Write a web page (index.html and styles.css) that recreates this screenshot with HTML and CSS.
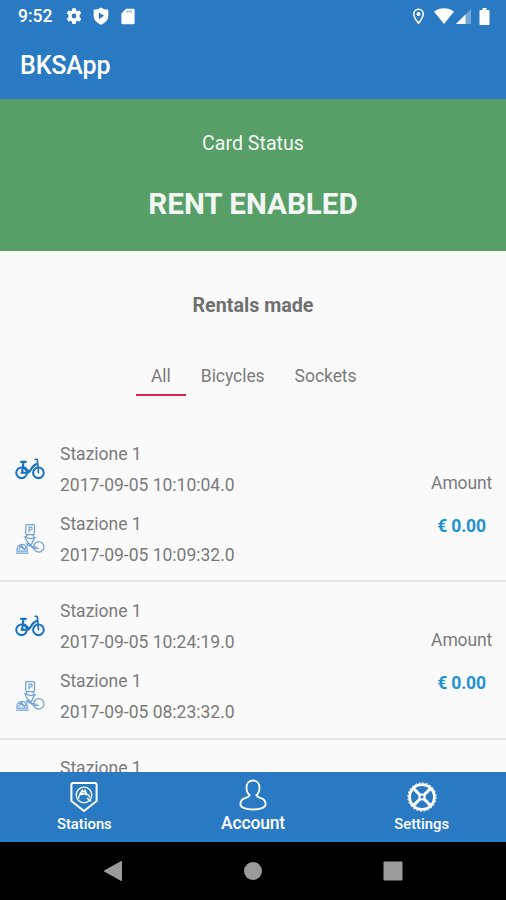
FILE: index.html
```html
<!DOCTYPE html>
<html lang="en">
<head>
    <meta charset="UTF-8">
    <meta name="viewport" content="width=device-width, initial-scale=1.0">
    <title>BKSApp</title>
    <link rel="stylesheet" href="styles.css">
</head>
<body>
    <svg class="sprite" xmlns="http://www.w3.org/2000/svg">
        <symbol id="bike" viewBox="0 0 32 24">
            <g fill="none" stroke="currentColor" stroke-linecap="round" stroke-linejoin="round">
                <circle cx="7" cy="16" r="5.700" stroke-width="2.200"/>
                <circle cx="25" cy="16" r="5.700" stroke-width="2.200"/>
                <path d="M6.500 4.400h5M9 4.600l-1.400 11.400" stroke-width="2.300"/>
                <path d="M7 16h6.600c3.400 0 3.200-7.600 9.600-9.200M8.400 10c3.400.6 4 2.600 6 4.600" stroke-width="2.300"/>
                <path d="M21.600 1.600h1.200q1 0 1.100 1.100L25 16" stroke-width="1.800"/>
            </g>
        </symbol>
        <symbol id="dock" viewBox="0 0 32 34">
            <g fill="none" stroke="currentColor" stroke-linecap="round" stroke-linejoin="round">
                <rect x="11.400" y="1.600" width="9.400" height="10.800" rx="1.200" stroke-width="1.300"/>
                <path d="M15 9.600V4.400h1.800a1.500 1.500 0 0 1 0 3H15" stroke-width="1.300"/>
                <path d="M13 12.600l-2 3.400 3 5.400-2 5M19 12.600l2 3.400-3 6M10 14.600l6 2 6-1M15 21.400l3 3.400 5 1M14 21l3 3 3-7" stroke-width="1.200"/>
                <circle cx="25.400" cy="25.400" r="5.500" stroke-width="1.300"/>
                <path d="M1.400 32h12.800M2.200 30h11M2 29.400c0-9 10-9 11.400 0M4 28l3-4 3 4 2-2.400M4.500 24.500l6 4M12 22l8 5h5" stroke-width="1.300"/>
            </g>
        </symbol>
    </svg>

    <div class="status-bar">
        <span class="clock">9:52</span>
        <svg class="status-icon gear" viewBox="0 0 24 24"><path fill="#fff" fill-rule="evenodd" d="M9.800 1.500h4.400l.5 3 2 1.100 2.800-1.100 2.200 3.800-2.300 1.900v3.600l2.300 1.900-2.200 3.800-2.800-1.100-2 1.100-.5 3H9.800l-.5-3-2-1.100-2.800 1.100-2.200-3.800 2.300-1.900v-3.600L2.300 8.300l2.200-3.800 2.800 1.100 2-1.100zM12 8.800a3.200 3.200 0 1 0 0 6.400 3.200 3.200 0 0 0 0-6.400z"/></svg>
        <svg class="status-icon shield" viewBox="0 0 24 24"><path fill="#fff" fill-rule="evenodd" d="M12 .6c3 2 6 3 9.800 3v7.800c0 5.400-3.600 9.900-9.800 12.200-6.200-2.300-9.800-6.800-9.800-12.200V3.600C6 3.600 9 2.600 12 .6zM9.200 7.200v9l7-4.500z"/></svg>
        <svg class="status-icon sd" viewBox="0 0 14 17"><path fill="#fff" d="M5 .8h7.400a1.200 1.200 0 0 1 1.200 1.200v13a1.200 1.200 0 0 1-1.200 1.200H1.600A1.200 1.200 0 0 1 .4 15V5.400z"/><path d="M5.600 3.400h5.800" stroke="#2a7ac3" stroke-width="2" stroke-dasharray="1.200 .8" opacity=".7"/></svg>
        <div class="status-right">
            <svg class="pin" viewBox="0 0 12 17"><path d="M6 1.200a4.700 4.700 0 0 0-4.700 4.700C1.300 9.200 6 15.300 6 15.300s4.700-6.100 4.700-9.400A4.700 4.700 0 0 0 6 1.200z" fill="none" stroke="#fff" stroke-width="1.500"/><circle cx="6" cy="6" r="2" fill="#fff"/></svg>
            <svg class="wifi" viewBox="0 0 20 16"><path fill="#fff" d="M0 3.500C6-1 14-1 20 3.500L10 16z"/></svg>
            <svg class="signal" viewBox="0 0 15 15"><path fill="#fff" opacity=".35" d="M15 0v15H0z"/><path fill="#fff" d="M9.500 5.500V15H0z"/></svg>
            <svg class="battery" viewBox="0 0 10 17"><path fill="#fff" d="M3 0h4v2h2.200q.8 0 .8.800v13.400q0 .8-.8.800H.8q-.8 0-.8-.8V2.800Q0 2 .8 2H3z"/></svg>
        </div>
    </div>

    <header class="app-bar">
        <h1>BKSApp</h1>
    </header>

    <section class="card-status">
        <p class="card-label">Card Status</p>
        <p class="card-value">RENT ENABLED</p>
    </section>

    <main class="rentals">
        <h2>Rentals made</h2>
        <div class="tabs">
            <a class="tab active">All</a>
            <a class="tab">Bicycles</a>
            <a class="tab">Sockets</a>
        </div>

        <div class="rental">
            <div class="trips">
                <div class="trip">
                    <svg class="trip-icon bike"><use href="#bike"/></svg>
                    <div class="trip-info"><p>Stazione 1</p><p>2017-09-05 10:10:04.0</p></div>
                </div>
                <div class="trip">
                    <svg class="trip-icon dock"><use href="#dock"/></svg>
                    <div class="trip-info"><p>Stazione 1</p><p>2017-09-05 10:09:32.0</p></div>
                </div>
            </div>
            <div class="amount">
                <p>Amount</p>
                <p class="price">€ 0.00</p>
            </div>
        </div>

        <div class="rental">
            <div class="trips">
                <div class="trip">
                    <svg class="trip-icon bike"><use href="#bike"/></svg>
                    <div class="trip-info"><p>Stazione 1</p><p>2017-09-05 10:24:19.0</p></div>
                </div>
                <div class="trip">
                    <svg class="trip-icon dock"><use href="#dock"/></svg>
                    <div class="trip-info"><p>Stazione 1</p><p>2017-09-05 08:23:32.0</p></div>
                </div>
            </div>
            <div class="amount">
                <p>Amount</p>
                <p class="price">€ 0.00</p>
            </div>
        </div>

        <div class="rental last">
            <div class="trips">
                <div class="trip">
                    <svg class="trip-icon bike"><use href="#bike"/></svg>
                    <div class="trip-info"><p>Stazione 1</p></div>
                </div>
            </div>
        </div>
    </main>

    <nav class="bottom-nav">
        <a class="nav-item">
            <svg viewBox="0 0 30 32">
                <g fill="none" stroke="#fff" stroke-linejoin="round" stroke-linecap="round">
                    <path d="M4 2h22q1.600 0 1.600 1.600V20L15 30 2.400 20V3.600Q2.400 2 4 2z" stroke-width="2"/>
                    <circle cx="15" cy="14" r="7.800" stroke-width="1.300"/>
                    <path d="M9.800 17a3 3 0 0 1 4-3.500M16.500 13.500a3.200 3.200 0 0 1 4 2.500M11 13l2.500-4M17.500 13l-1.500-4M12.500 12.500h5M13 10.500h3M18.500 17.500l3 2.500" stroke-width="1.500"/>
                </g>
            </svg>
            <span>Stations</span>
        </a>
        <a class="nav-item selected">
            <svg viewBox="0 0 30 32">
                <path d="M15 1.500c-4 0-6.500 3-6.500 7.200 0 3.300 1.300 6 3.200 7.600-.5 1.600-2.200 2-4.600 2.800-3.200 1-4.700 3-4.700 6.300 0 3 5.500 5.100 12.600 5.100s12.600-2.100 12.600-5.100c0-3.300-1.500-5.300-4.700-6.300-2.400-.8-4.100-1.200-4.600-2.800 1.900-1.600 3.200-4.300 3.200-7.600 0-4.200-2.500-7.200-6.500-7.200z" fill="none" stroke="#fff" stroke-width="1.800"/>
            </svg>
            <span>Account</span>
        </a>
        <a class="nav-item">
            <svg viewBox="0 0 30 32">
                <g fill="none" stroke="#fff">
                    <circle cx="15" cy="16" r="12.400" stroke-width="2.800"/>
                    <circle cx="15" cy="16" r="14.200" stroke-width="1" stroke-dasharray="1.850 1.867"/>
                    <circle cx="15" cy="16" r="2.600" stroke-width="2"/>
                    <path d="M13.200 14.200L6.600 7.600M16.800 14.200l6.600-6.600M13.200 17.800l-6.600 6.600M16.800 17.800l6.600 6.600" stroke-width="3"/>
                </g>
            </svg>
            <span>Settings</span>
        </a>
    </nav>

    <div class="system-nav">
        <svg viewBox="0 0 20 22"><path fill="#9b9b9b" d="M19 1.500v19q0 .8-.8.400L1.200 11.600q-.9-.5 0-1L18.200 1.100q.8-.4.8.4z"/></svg>
        <svg viewBox="0 0 20 22"><circle cx="10" cy="11" r="9" fill="#9b9b9b"/></svg>
        <svg viewBox="0 0 20 22"><rect x=".5" y="1.500" width="19" height="19" rx="1" fill="#9b9b9b"/></svg>
    </div>
</body>
</html>
```

FILE: styles.css
```css
body {
    margin: 0;
    width: 506px;
    height: 900px;
    display: flex;
    flex-direction: column;
    overflow: hidden;
    background-color: #fafafa;
    color: #7a7a7a;
    font-family: Roboto, "Liberation Sans", sans-serif;
    font-size: 17.5px;
}
h1, h2, p {
    margin: 0;
}
.sprite {
    display: none;
}
.status-bar {
    height: 32px;
    flex: none;
    display: flex;
    align-items: center;
    padding: 0 16px 0 18px;
    background-color: #2a7ac3;
    color: #fff;
}
.clock {
    width: 47px;
    font-size: 17.5px;
    font-weight: 500;
}
.status-icon {
    height: 18px;
    width: 18px;
}
.shield {
    margin-left: 9px;
}
.sd {
    margin-left: 10px;
    width: 16px;
    height: 17px;
}
.status-right {
    margin-left: auto;
    display: flex;
    align-items: center;
}
.pin {
    width: 13px;
    height: 17px;
    margin-right: 9px;
}
.wifi {
    width: 20px;
    height: 16px;
    margin-right: 2px;
}
.signal {
    width: 15px;
    height: 15px;
    margin-right: 8px;
}
.battery {
    width: 11px;
    height: 17px;
}
.app-bar {
    height: 67px;
    flex: none;
    display: flex;
    align-items: center;
    padding: 0 0 0 20px;
    box-sizing: border-box;
    background-color: #2a7ac3;
    color: #fff;
}
h1 {
    font-size: 25px;
    line-height: 31px;
    letter-spacing: -0.15px;
    font-weight: 500;
}
.card-status {
    height: 152px;
    flex: none;
    display: flex;
    flex-direction: column;
    align-items: center;
    box-sizing: border-box;
    padding-top: 32px;
    background-color: #579e67;
    color: #f2f7f3;
}
.card-label {
    font-size: 19.6px;
    line-height: 25px;
}
.card-value {
    margin-top: 28px;
    font-size: 29.6px;
    line-height: 41px;
    font-weight: 700;
}
.rentals {
    flex: 1;
    min-height: 0;
    overflow: hidden;
}
h2 {
    padding-top: 43px;
    text-align: center;
    font-size: 19.7px;
    line-height: 24px;
    font-weight: 700;
    color: #707070;
}
.tabs {
    display: flex;
    margin: 44px 0 28px 136px;
}
.tab {
    padding: 0 15px;
    height: 32px;
    line-height: 28px;
    letter-spacing: -0.05px;
    border-bottom: 2px solid transparent;
}
.tab.active {
    border-color: #d2284b;
}
.rental {
    display: flex;
    justify-content: space-between;
    height: 158px;
    box-sizing: border-box;
    padding: 14px 14px 0 15px;
    border-bottom: 2px solid #e4e4e4;
}
.tabs + .rental {
    padding-top: 15px;
}
.rental.last {
    padding-top: 13px;
}
.trips {
    display: flex;
    flex-direction: column;
    gap: 8px;
}
.trip {
    display: flex;
    align-items: center;
    gap: 15px;
    height: 62px;
    line-height: 31px;
}
.trip-info {
    height: 62px;
}
.trip-icon {
    width: 30px;
    margin-bottom: 2px;
    color: #1b74c0;
}
.bike {
    height: 24px;
}
.dock {
    height: 34px;
    color: #6fa3d6;
}
.amount {
    padding-top: 32px;
    text-align: center;
    line-height: 25px;
    letter-spacing: -0.15px;
}
.price {
    margin-top: 18px;
    color: #1f92d4;
    font-weight: 700;
}
.bottom-nav {
    height: 70px;
    flex: none;
    display: flex;
    background-color: #2a7ac3;
    color: #fff;
}
.nav-item {
    flex: 1;
    display: flex;
    flex-direction: column;
    align-items: center;
    padding-top: 9px;
    font-size: 14.8px;
    font-weight: 500;
}
.nav-item svg {
    width: 30px;
    height: 32px;
}
.nav-item span {
    line-height: 22px;
}
.nav-item.selected {
    padding-top: 7px;
    font-size: 17.5px;
    letter-spacing: -0.15px;
}
.nav-item.selected span {
    line-height: 25px;
}
.system-nav {
    height: 58px;
    flex: none;
    display: flex;
    justify-content: center;
    align-items: center;
    gap: 120px;
    background-color: #000;
}
.system-nav svg {
    width: 20px;
    height: 22px;
}
```
